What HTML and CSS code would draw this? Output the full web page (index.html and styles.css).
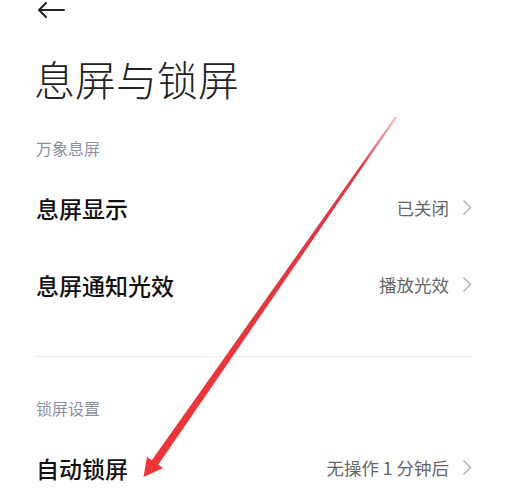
FILE: index.html
```html
<!DOCTYPE html>
<html lang="zh-CN">
<head>
    <meta charset="UTF-8">
    <meta name="viewport" content="width=device-width, initial-scale=1.0">
    <title>息屏与锁屏</title>
    <link rel="stylesheet" href="styles.css">
</head>
<body>

<div class="page">
    <div class="top-bar">
        <svg class="back" width="28" height="16" viewBox="0 0 28 16">
            <path d="M27 8 H2 M9 1 L2 8 L9 15" fill="none" stroke="#222" stroke-width="2" stroke-linecap="round" stroke-linejoin="round"/>
        </svg>
    </div>

    <h1 class="title">息屏与锁屏</h1>

    <div class="section">
        <div class="section-title">万象息屏</div>
        <div class="row">
            <span class="label">息屏显示</span>
            <span class="value">已关闭
                <svg class="chevron" width="10" height="17" viewBox="0 0 10 17"><path d="M1.5 1.5 L8.5 8.5 L1.5 15.5" fill="none" stroke="#b4b4b4" stroke-width="1.5"/></svg>
            </span>
        </div>
        <div class="row">
            <span class="label">息屏通知光效</span>
            <span class="value">播放光效
                <svg class="chevron" width="10" height="17" viewBox="0 0 10 17"><path d="M1.5 1.5 L8.5 8.5 L1.5 15.5" fill="none" stroke="#b4b4b4" stroke-width="1.5"/></svg>
            </span>
        </div>
    </div>

    <div class="divider"></div>

    <div class="section">
        <div class="section-title">锁屏设置</div>
        <div class="row">
            <span class="label">自动锁屏</span>
            <span class="value">无操作 1 分钟后
                <svg class="chevron" width="10" height="17" viewBox="0 0 10 17"><path d="M1.5 1.5 L8.5 8.5 L1.5 15.5" fill="none" stroke="#b4b4b4" stroke-width="1.5"/></svg>
            </span>
        </div>
    </div>
</div>

<!-- red annotation arrow drawn over the page -->
<svg class="annotation" width="507" height="500" viewBox="0 0 507 500">
    <defs>
        <linearGradient id="fade" x1="396" y1="117" x2="150" y2="470" gradientUnits="userSpaceOnUse">
            <stop offset="0" stop-color="#e8303a" stop-opacity="0.35"/>
            <stop offset="0.15" stop-color="#d92f3b" stop-opacity="0.95"/>
            <stop offset="1" stop-color="#ef3437"/>
        </linearGradient>
    </defs>
    <polygon points="395.2,116.4 396.8,117.6 158.2,464.8 163,468 143.5,477 147,457 151.8,460.2" fill="url(#fade)"/>
</svg>

</body>
</html>
```

FILE: styles.css
```css
body {
    margin: 0;
    background-color: #fff;
    font-family: "Noto Sans CJK SC", "Noto Sans", sans-serif;
    position: relative;
    width: 507px;
    height: 500px;
    overflow: hidden;
}
.page {
    padding: 0 35px 0 36px;
}
.top-bar {
    height: 20px;
    display: flex;
    align-items: center;
}
.back {
    margin-left: 1px;
}
.title {
    margin: 34px 0 0 -2px;
    font-size: 41px;
    line-height: 48px;
    font-weight: 300;
    color: #222;
}
.section-title {
    margin-top: 36px;
    font-size: 16px;
    line-height: 20px;
    color: #8c91a2;
}
.row {
    height: 77px;
    display: flex;
    align-items: center;
    justify-content: space-between;
}
.section-title + .row {
    margin-top: 11px;
}
.label {
    font-size: 23px;
    font-weight: 500;
    color: #111;
}
.value {
    display: flex;
    align-items: center;
    gap: 13px;
    font-size: 17.5px;
    color: #666;
}
.divider {
    height: 1px;
    background-color: #ececec;
    margin-top: 33px;
}
.divider + .section .section-title {
    margin-top: 41px;
}
.annotation {
    position: absolute;
    left: 0;
    top: 0;
    pointer-events: none;
}
```
